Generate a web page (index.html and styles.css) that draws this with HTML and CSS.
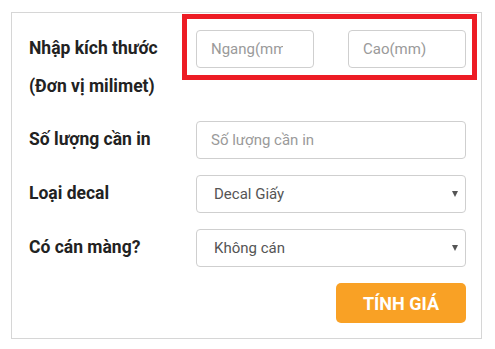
FILE: index.html
```html
<!DOCTYPE html>
<html>

<head>
    <title>Tính giá in decal</title>
    <meta charset="UTF-8">
    <meta name="viewport" content="width=device-width, initial-scale=1.0">
    <link rel="stylesheet" href="styles.css">
</head>

<body>
    <div class="calc-box">
        <form id="calcForm" class="calc-form">
            <label class="field-label">Nhập kích thước<br>(Đơn vị milimet)</label>
            <div class="size-group">
                <input type="text" id="width" placeholder="Ngang(mm)">
                <input type="text" id="height" placeholder="Cao(mm)">
                <span class="mark"></span>
            </div>

            <label class="field-label">Số lượng cần in</label>
            <input type="text" id="qty" placeholder="Số lượng cần in">

            <label class="field-label">Loại decal</label>
            <div class="select-wrap">
                <select id="decalType">
                    <option>Decal Giấy</option>
                    <option>Decal Nhựa</option>
                    <option>Decal Trong</option>
                </select>
            </div>

            <label class="field-label">Có cán màng?</label>
            <div class="select-wrap">
                <select id="laminate">
                    <option>Không cán</option>
                    <option>Cán bóng</option>
                    <option>Cán mờ</option>
                </select>
            </div>

            <div></div>
            <div class="actions">
                <button type="submit">TÍNH GIÁ</button>
            </div>
        </form>
    </div>
</body>

</html>
```

FILE: styles.css
```css
body {
    font-family: Roboto, "Liberation Sans", sans-serif;
    margin: 0;
    padding: 12px 13px 10px 11px;
    background: #fff;
}
.calc-box {
    width: 471px;
    border: 1px solid #d6d6d6;
    padding: 17px 15px 15px 17px;
    box-sizing: border-box;
}
.calc-form {
    display: grid;
    grid-template-columns: 167px 1fr;
    row-gap: 16px;
    align-items: center;
}
.field-label {
    font-size: 17.5px;
    font-weight: bold;
    color: #222;
    line-height: 37.5px;
}
.size-group {
    position: relative;
    align-self: start;
    display: flex;
    justify-content: space-between;
}
.size-group input {
    width: 118px;
    padding-right: 30px;
}
.mark {
    position: absolute;
    left: -14px;
    top: -16px;
    width: 295px;
    height: 66px;
    border: 5px solid #ed1c24;
    box-sizing: border-box;
}
input,
select {
    width: 100%;
    height: 38px;
    padding: 0 14px;
    border: 1px solid #cfcfcf;
    border-radius: 4px;
    font-family: Roboto, "Liberation Sans", sans-serif;
    font-size: 15px;
    color: #555;
    background: #fff;
    box-sizing: border-box;
}
input::placeholder {
    color: #9a9a9a;
}
.select-wrap {
    position: relative;
}
select {
    appearance: none;
    -webkit-appearance: none;
    padding-left: 17px;
}
.select-wrap::after {
    content: "";
    position: absolute;
    right: 8px;
    top: 16px;
    border-left: 3px solid transparent;
    border-right: 3px solid transparent;
    border-top: 6px solid #555;
    pointer-events: none;
}
.actions {
    display: flex;
    justify-content: flex-end;
}
button {
    width: 130px;
    height: 40px;
    background: #f9a125;
    color: white;
    border: none;
    border-radius: 5px;
    font-family: Roboto, "Liberation Sans", sans-serif;
    font-size: 18px;
    font-weight: bold;
    cursor: pointer;
}
```
